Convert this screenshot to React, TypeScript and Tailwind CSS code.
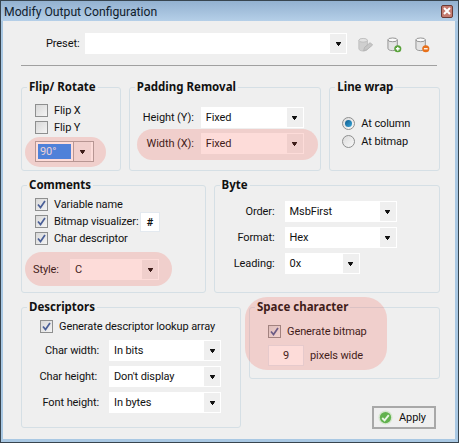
const font = { fontFamily: 'Roboto, sans-serif' };

function Arrow() {
  return (
    <svg width="5" height="4" viewBox="0 0 5 4" className="block">
      <path d="M0 0h5v1H0zM.5 1h4v1h-4zM1 2h3v1H1zM2 3h1v1H2z" fill="#111" />
    </svg>
  );
}

function Combo({ value, className }: { value: string; className: string }) {
  return (
    <div className={`flex border border-white bg-white ${className}`}>
      <span className="flex-1 truncate pl-1 leading-[20px] text-[#111]">{value}</span>
      <span className="flex w-4 items-center justify-center bg-[#efefef]">
        <Arrow />
      </span>
    </div>
  );
}

function Check({ label, checked, className = '' }: { label: string; checked?: boolean; className?: string }) {
  return (
    <div className={`flex h-[13px] items-center gap-[6px] ${className}`}>
      <span className="flex h-[13px] w-[13px] shrink-0 items-center justify-center border border-[#8e8f8f] bg-gradient-to-br from-[#d8d8d8] to-[#f4f4f4]">
        {checked && (
          <svg width="9" height="9" viewBox="0 0 9 9">
            <path d="M1 4.500 3.500 7.500 8 1" fill="none" stroke="#4a5f97" strokeWidth="1.7" />
          </svg>
        )}
      </span>
      <span className="whitespace-nowrap">{label}</span>
    </div>
  );
}

function Radio({ label, on }: { label: string; on?: boolean }) {
  return (
    <div className="flex h-[13px] items-center gap-[6px]">
      <span className="flex h-[13px] w-[13px] shrink-0 items-center justify-center rounded-full border border-[#8e8f8f] bg-gradient-to-br from-[#dcdcdc] to-[#f8f8f8]">
        {on && <span className="h-[7px] w-[7px] rounded-full bg-gradient-to-br from-[#0f5c8f] to-[#37a5d8]" />}
      </span>
      <span className="whitespace-nowrap">{label}</span>
    </div>
  );
}

function Group({ title, className, children }: { title: string; className: string; children: React.ReactNode }) {
  return (
    <fieldset className={`relative min-w-0 rounded-[3px] border border-[#d5dfe5] ${className}`}>
      <legend className="ml-[5px] px-[2px] font-['Noto_Sans'] text-[11.500px] leading-[14px] font-bold tracking-normal text-[#111]">{title}</legend>
      {children}
    </fieldset>
  );
}

function Row({ label, labelWidth, children }: { label: string; labelWidth: string; children: React.ReactNode }) {
  return (
    <div className="flex items-center">
      <span className={`text-right whitespace-nowrap ${labelWidth}`}>{label}</span>
      {children}
    </div>
  );
}

// translucent marker drawn over the form, same as in the annotated screenshot
function Marker({ className }: { className: string }) {
  return <div className={`pointer-events-none absolute z-10 bg-[#f55041]/20 ${className}`} />;
}

function DbIcon({ badge, sign }: { badge: string; sign: 'plus' | 'minus' }) {
  return (
    <svg width="15" height="16" viewBox="0 0 16 17">
      <path d="M1 3v9c0 1.500 2 2.500 5 2.500s5-1 5-2.500V3z" fill="#e4e4e4" stroke="#8f8f8f" />
      <ellipse cx="6" cy="3" rx="5" ry="2" fill="#fbfbfb" stroke="#8f8f8f" />
      <circle cx="11.500" cy="12.500" r="3.800" fill={badge} />
      <path d={sign === 'plus' ? 'M9.500 11.800h1.300V10.500h1.400v1.300h1.300v1.400h-1.300v1.300h-1.400v-1.300H9.500z' : 'M9.500 11.800h4v1.400h-4z'} fill="#fff" />
    </svg>
  );
}

export default function App() {
  return (
    <div className="flex h-[443px] w-[459px] flex-col overflow-hidden border border-[#38454f] bg-[#efefef] text-[11px] leading-[15px] tracking-[-0.1px] text-[#111]" style={font}>
      <div className="flex h-[20px] shrink-0 items-center justify-between bg-gradient-to-b from-[#93b1d0] to-[#b5cfe8] pr-[5px] pl-[3px] tracking-normal">
        <span className="pt-[2px] text-[12.200px] text-[#10202c]">Modify Output Configuration</span>
        <span className="flex h-[13px] w-[12px] items-center justify-center rounded-[2px] border border-[#6b3a34] bg-[#c47a6f]">
          <svg width="8" height="8" viewBox="0 0 8 8">
            <path d="M1 1 7 7M7 1 1 7" stroke="#fff" strokeWidth="2" />
          </svg>
        </span>
      </div>

      <div className="flex flex-1 flex-col border-r-[3px] border-b-[3px] border-l-[2px] border-[#a9c8e3] pt-[12px] pr-[15px] pl-[18px]">
        <div className="flex items-center">
          <span className="w-[64px] pl-[25px]">Preset:</span>
          <Combo value="" className="h-[21px] w-[262px]" />
          <div className="mt-[3px] ml-[10px] flex items-center gap-[13px]">
            <svg width="17" height="17" viewBox="0 0 18 18">
              <path d="M2 3.500v9c0 1.300 2 2.300 4.500 2.300s4.500-1 4.500-2.300v-9z" fill="#cfcfcf" stroke="#bdbdbd" />
              <ellipse cx="6.500" cy="3.500" rx="4.500" ry="2" fill="#e2e2e2" stroke="#bdbdbd" />
              <path d="M7 14.500 8 11l6-5 2.500 2.500-6 5z" fill="#c6c6c6" stroke="#b4b4b4" />
            </svg>
            <DbIcon badge="#5aa33c" sign="plus" />
            <DbIcon badge="#e8701a" sign="minus" />
          </div>
        </div>
        <div className="mt-[11px] mr-[3px] border-b border-[#a0a0a0]" />

        <div className="relative mt-[14px] flex flex-1 flex-col">
          <div className="flex gap-[8px]">
            <Group title="Flip/ Rotate" className="h-[91px] w-[100px]">
              <div className="flex flex-col gap-[4px] pt-[10px] pl-[13px]">
                <Check label="Flip X" />
                <Check label="Flip Y" />
                <div className="mt-[3px] flex h-[21px] w-[59px] border border-[#a8a8a8] bg-white p-[2px]">
                  <span className="flex-1 bg-[#268eff] pl-[2px] leading-[15px] text-[#e8eefc]">90°</span>
                  <span className="-my-[2px] ml-[2px] flex w-[18px] items-center justify-center border-l border-[#a8a8a8] bg-[#efefef]">
                    <Arrow />
                  </span>
                </div>
              </div>
            </Group>
            <Group title="Padding Removal" className="h-[91px] w-[193px]">
              <div className="flex flex-col gap-[5px] pt-[13px]">
                <Row label="Height (Y):" labelWidth="w-[64px]">
                  <Combo value="Fixed" className="ml-[7px] h-[21px] w-[103px]" />
                </Row>
                <Row label="Width (X):" labelWidth="w-[64px]">
                  <Combo value="Fixed" className="ml-[7px] h-[21px] w-[103px]" />
                </Row>
              </div>
            </Group>
            <Group title="Line wrap" className="h-[91px] w-[111px]">
              <div className="flex flex-col gap-[5px] pt-[23px] pl-[12px]">
                <Radio label="At column" on />
                <Radio label="At bitmap" />
              </div>
            </Group>
          </div>

          <div className="mt-[7px] flex gap-[8px]">
            <Group title="Comments" className="h-[115px] w-[185px]">
              <div className="flex flex-col gap-[4px] pt-[6px] pl-[13px]">
                <Check label="Variable name" checked />
                <div className="relative">
                  <Check label="Bitmap visualizer:" checked />
                  <span className="absolute top-[-3px] left-[105px] flex h-[20px] w-[20px] items-center justify-center border border-[#e3e9ef] bg-white font-bold">#</span>
                </div>
                <Check label="Char descriptor" checked />
                <div className="mt-[10px] -ml-[2px] flex items-center">
                  <span className="w-[37px]">Style:</span>
                  <Combo value="C" className="h-[21px] w-[89px]" />
                </div>
              </div>
            </Group>
            <Group title="Byte" className="h-[115px] w-[227px]">
              <div className="flex flex-col gap-[5px] pt-[9px]">
                <Row label="Order:" labelWidth="w-[60px]">
                  <Combo value="MsbFirst" className="ml-[10px] h-[21px] w-[112px]" />
                </Row>
                <Row label="Format:" labelWidth="w-[60px]">
                  <Combo value="Hex" className="ml-[10px] h-[21px] w-[112px]" />
                </Row>
                <Row label="Leading:" labelWidth="w-[60px]">
                  <Combo value="0x" className="ml-[10px] h-[21px] w-[75px]" />
                </Row>
              </div>
            </Group>
          </div>

          <div className="mt-[7px] flex gap-[8px]">
            <Group title="Descriptors" className="h-[128px] w-[221px]">
              <div className="flex flex-col gap-[5px] pt-[6px]">
                <Check label="Generate descriptor lookup array" checked className="mb-[2px] ml-[18px]" />
                <Row label="Char width:" labelWidth="w-[77px]">
                  <Combo value="In bits" className="ml-[10px] h-[21px] w-[112px]" />
                </Row>
                <Row label="Char height:" labelWidth="w-[75px]">
                  <Combo value="Don't display" className="ml-[12px] h-[21px] w-[112px]" />
                </Row>
                <Row label="Font height:" labelWidth="w-[77px]">
                  <Combo value="In bytes" className="ml-[10px] h-[21px] w-[112px]" />
                </Row>
              </div>
            </Group>
            <div className="flex flex-1 flex-col">
              <Group title="Space character" className="h-[79px] w-[191px]">
                <div className="flex flex-col gap-[7px] pt-[11px] pl-[18px]">
                  <Check label="Generate bitmap" checked />
                  <div className="flex items-center gap-[6px]">
                    <span className="flex h-[21px] w-[36px] items-center justify-center border border-[#e3e9ef] bg-white">9</span>
                    <span>pixels wide</span>
                  </div>
                </div>
              </Group>
              <button className="mt-[27px] ml-[123px] flex h-[23px] w-[64px] items-center gap-[6px] border-2 border-[#a8a8a8] bg-[#efefef] pl-[4px]">
                <svg width="15" height="15" viewBox="0 0 16 16">
                  <circle cx="8" cy="8" r="7.500" fill="#d5e6cf" />
                  <circle cx="8" cy="8" r="6" fill="#62b24e" />
                  <path d="M4.500 8.500 7 11l4.500-5.500" fill="none" stroke="#eaf6e6" strokeWidth="2" />
                </svg>
                Apply
              </button>
            </div>
          </div>

          <Marker className="top-[57px] left-[4px] h-[30px] w-[81px] rounded-[15px]" />
          <Marker className="top-[49px] left-[116px] h-[31px] w-[181px] rounded-[16px]" />
          <Marker className="top-[172px] left-[4px] h-[34px] w-[147px] rounded-[17px]" />
          <Marker className="top-[217px] left-[224px] h-[73px] w-[142px] rounded-[22px]" />
        </div>
      </div>
    </div>
  );
}
